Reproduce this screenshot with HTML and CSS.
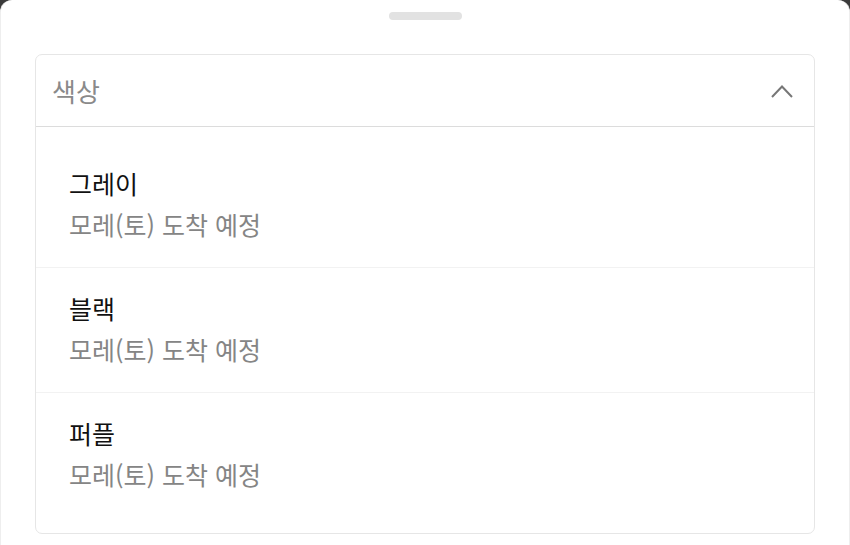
FILE: index.html
```html
<!DOCTYPE html>
<html lang="ko">
<head>
    <meta charset="UTF-8">
    <title>색상 선택</title>

    <link rel="stylesheet" href="styles.css">

</head>
<body>

<div class="sheet">
    <div class="handle"></div>

    <div class="card">
        <div class="card-head">
            <span class="card-title">색상</span>
            <svg class="chevron" width="22" height="14" viewBox="0 0 22 14">
                <polyline points="1,13 11,2.5 21,13" fill="none" stroke="#777" stroke-width="2"/>
            </svg>
        </div>

        <div class="list">
            <div class="item">
                <div class="name">그레이</div>
                <div class="eta">모레(토) 도착 예정</div>
            </div>
            <div class="item">
                <div class="name">블랙</div>
                <div class="eta">모레(토) 도착 예정</div>
            </div>
            <div class="item">
                <div class="name">퍼플</div>
                <div class="eta">모레(토) 도착 예정</div>
            </div>
        </div>
    </div>
</div>

</body>
</html>
```

FILE: styles.css
```css
* {
    box-sizing: border-box;
}

body {
    margin: 0;
    background-color: #3a3a3a;
    font-family: "Noto Sans CJK KR", "Noto Sans", sans-serif;
}

.sheet {
    height: 545px;
    background-color: #fff;
    border-radius: 12px 12px 0 0;
    border-left: 1px solid #eee;
    border-right: 1px solid #eee;
    padding-top: 12px;
}

.handle {
    width: 73px;
    height: 8px;
    margin: 0 auto;
    border-radius: 4px;
    background-color: #e2e2e2;
}

.card {
    margin: 34px 34px 0;
    border: 1px solid #e6e6e6;
    border-radius: 7px;
}

.card-head {
    height: 72px;
    display: flex;
    align-items: center;
    justify-content: space-between;
    padding: 0 21px 0 16px;
    border-bottom: 1px solid #dcdcdc;
}

.card-title {
    font-size: 26px;
    color: #8a8a8a;
}

.list {
    padding: 16px 0;
}

.item {
    height: 125px;
    padding: 20px 33px 0;
    border-bottom: 1px solid #f2f2f2;
}

.item:last-child {
    border-bottom: none;
    height: 124px;
}

.name {
    font-size: 25px;
    line-height: 41px;
    color: #111;
}

.eta {
    font-size: 25px;
    line-height: 41px;
    color: #858585;
}
```
